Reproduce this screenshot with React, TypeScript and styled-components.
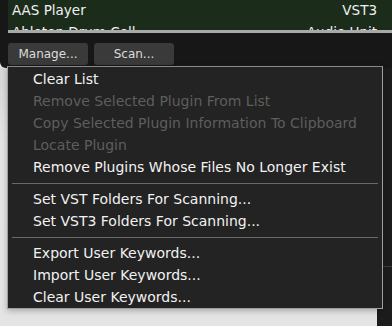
import { createGlobalStyle } from "styled-components";
import styled from "styled-components";

const GlobalStyle = createGlobalStyle`
  html, body {
    margin: 0;
    padding: 0;
    background: #e2e2e2;
  }
  * {
    box-sizing: border-box;
  }
`;

const Window = styled.div`
  position: relative;
  width: 392px;
  height: 326px;
  overflow: hidden;
  display: flex;
  flex-direction: column;
  font-family: "DejaVu Sans", "Liberation Sans", sans-serif;
  background: #e2e2e2;
`;

const Top = styled.div`
  display: flex;
  flex-direction: column;
  background: #171717;
  padding-left: 8px;
  border-bottom-left-radius: 6px;
  height: 68px;
`;

const PluginList = styled.div`
  height: 30px;
  overflow: hidden;
  background: #1b2c1b;
`;

const PluginRow = styled.div`
  display: flex;
  justify-content: space-between;
  align-items: flex-start;
  height: 22px;
  padding: 3px 15px 0 4px;
  line-height: 15px;
  color: #f0f0f0;
  font-size: 13.5px;
`;

const ScrollBar = styled.div`
  height: 3px;
  background: #a9a9a9;
`;

const Toolbar = styled.div`
  display: flex;
  gap: 6px;
  padding: 10px 0 0 0;
`;

const ToolButton = styled.button`
  width: 80px;
  height: 22px;
  border: none;
  border-radius: 3px;
  background: #3a3a3a;
  color: #dcdcdc;
  font-family: "DejaVu Sans", "Liberation Sans", sans-serif;
  font-size: 12px;
  padding: 0;
`;

const Lower = styled.div`
  flex: 1;
  display: flex;
`;

const LightArea = styled.div`
  flex: 1;
  background: linear-gradient(#d6d6d6, #e6e6e6 30%, #e4e4e4);
`;

const DarkStrip = styled.div`
  width: 15px;
  background: #1c1c1c;
  display: flex;
  flex-direction: column;
  padding-top: 198px;
`;

const StripLine = styled.div`
  height: 1px;
  background: #3a3a3a;
`;

const Menu = styled.div`
  position: absolute;
  left: 7px;
  top: 66px;
  width: 376px;
  background: #232323;
  border: 1px solid #a0a0a0;
  border-top-color: #8a8a8a;
  padding: 1px 0 0;
  display: flex;
  flex-direction: column;
  box-shadow: 0 2px 6px rgba(0, 0, 0, 0.25);
`;

const MenuItem = styled.div<{ $disabled?: boolean }>`
  height: 22px;
  display: flex;
  align-items: center;
  padding-left: 25px;
  font-size: 14px;
  color: ${(p) => (p.$disabled ? "#5e5e5e" : "#f2f2f2")};
  white-space: nowrap;
`;

const Separator = styled.div`
  height: 10px;
  display: flex;
  align-items: center;
  padding: 0 4px;

  &::after {
    content: "";
    flex: 1;
    height: 1px;
    background: #6a6a6a;
  }
`;

const items: (string | { label: string; disabled: boolean } | null)[] = [
  "Clear List",
  { label: "Remove Selected Plugin From List", disabled: true },
  { label: "Copy Selected Plugin Information To Clipboard", disabled: true },
  { label: "Locate Plugin", disabled: true },
  "Remove Plugins Whose Files No Longer Exist",
  null,
  "Set VST Folders For Scanning...",
  "Set VST3 Folders For Scanning...",
  null,
  "Export User Keywords...",
  "Import User Keywords...",
  "Clear User Keywords...",
];

export default function App() {
  return (
    <>
      <GlobalStyle />
      <Window>
        <Top>
          <PluginList>
            <PluginRow>
              <span>AAS Player</span>
              <span>VST3</span>
            </PluginRow>
            <PluginRow>
              <span>Ableton Drum Cell</span>
              <span>Audio Unit</span>
            </PluginRow>
          </PluginList>
          <ScrollBar />
          <Toolbar>
            <ToolButton>Manage...</ToolButton>
            <ToolButton>Scan...</ToolButton>
          </Toolbar>
        </Top>
        <Lower>
          <LightArea />
          <DarkStrip>
            <StripLine />
          </DarkStrip>
        </Lower>
        <Menu>
          {items.map((it, i) =>
            it === null ? (
              <Separator key={i} />
            ) : typeof it === "string" ? (
              <MenuItem key={i}>{it}</MenuItem>
            ) : (
              <MenuItem key={i} $disabled={it.disabled}>
                {it.label}
              </MenuItem>
            )
          )}
        </Menu>
      </Window>
    </>
  );
}
